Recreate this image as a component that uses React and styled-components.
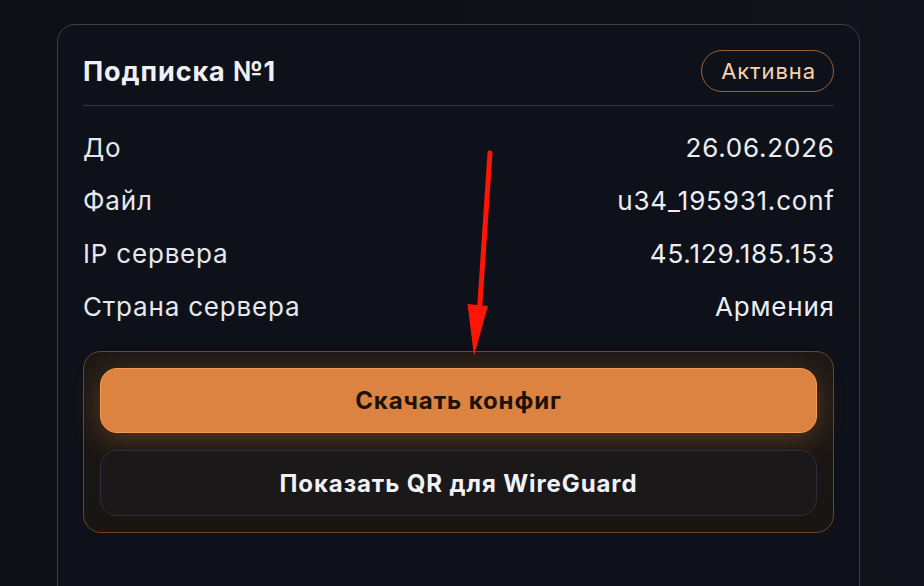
import React from 'react';
import styled, { createGlobalStyle } from 'styled-components';

const GlobalStyle = createGlobalStyle`
  html, body {
    margin: 0;
    padding: 0;
    background: #0d1017;
    font-family: Inter, "Noto Sans", sans-serif;
    color: #e9ebf1;
    overflow: hidden;
  }
`;

const Page = styled.div`
  position: relative;
  height: 586px;
  padding: 24px 65px 0 57px;
  box-sizing: border-box;
  background: linear-gradient(90deg, #0c0f16 0%, #0e1118 70%, #11141c 100%);
`;

const Card = styled.section`
  box-sizing: border-box;
  width: 803px;
  padding: 25px 25px 80px;
  border: 1px solid #3c3f51;
  border-radius: 18px;
  background: #0e1119;
`;

const Header = styled.div`
  display: flex;
  justify-content: space-between;
  align-items: center;
  padding-bottom: 13px;
  border-bottom: 1.5px solid #33364a;
`;

const Title = styled.h2`
  margin: 0;
  font-size: 27px;
  font-weight: 700;
  color: #eef0f6;
  letter-spacing: 0.9px;
`;

const Badge = styled.span`
  box-sizing: border-box;
  height: 42px;
  display: inline-flex;
  align-items: center;
  padding: 0 17px 0 19px;
  border: 1.5px solid #9a5f2e;
  border-radius: 21px;
  font-size: 22px;
  letter-spacing: 0.9px;
  color: #f6d3ad;
`;

const Rows = styled.dl`
  margin: 15px 0 0;
  display: flex;
  flex-direction: column;
`;

const Row = styled.div`
  height: 53px;
  display: flex;
  justify-content: space-between;
  align-items: center;
  font-size: 26px;
  letter-spacing: 0.8px;
`;

const Label = styled.dt`
  color: #e6e8ee;
`;

const Value = styled.dd`
  margin: 0 -0.8px 0 0;
  color: #eceef4;
`;

const Actions = styled.div`
  margin-top: 18px;
  padding: 16px;
  display: flex;
  flex-direction: column;
  gap: 17px;
  border: 1px solid #6e4526;
  border-radius: 18px;
  background: linear-gradient(180deg, #1d1815 0%, #181513 100%);
`;

const ActionButton = styled.button`
  box-sizing: border-box;
  height: ${p => (p.$primary ? '65px' : '66px')};
  width: 100%;
  border-radius: 17px;
  font-family: inherit;
  font-size: 24px;
  font-weight: 700;
  letter-spacing: 0.9px;
  cursor: pointer;
  border: 1.5px solid ${p => (p.$primary ? '#f39b52' : '#2c2f3d')};
  background: ${p => (p.$primary ? '#dc8341' : '#1b1819')};
  color: ${p => (p.$primary ? '#1d1209' : '#f0f2f8')};
  box-shadow: ${p => (p.$primary ? '0 6px 28px rgba(220, 131, 65, 0.32)' : 'none')};
`;

const Arrow = styled.svg`
  position: absolute;
  left: 0;
  top: 0;
  pointer-events: none;
`;

const details = [
  ['До', '26.06.2026'],
  ['Файл', 'u34_195931.conf'],
  ['IP сервера', '45.129.185.153'],
  ['Страна сервера', 'Армения'],
];

export default function App() {
  return (
    <>
      <GlobalStyle />
      <Page>
        <Card>
          <Header>
            <Title>Подписка №1</Title>
            <Badge>Активна</Badge>
          </Header>
          <Rows>
            {details.map(([label, value]) => (
              <Row key={label}>
                <Label>{label}</Label>
                <Value>{value}</Value>
              </Row>
            ))}
          </Rows>
          <Actions>
            <ActionButton $primary>Скачать конфиг</ActionButton>
            <ActionButton>Показать QR для WireGuard</ActionButton>
          </Actions>
        </Card>
        <Arrow width="924" height="586" viewBox="0 0 924 586">
          <line x1="490" y1="153" x2="479.5" y2="310" stroke="#ff1408" strokeWidth="5" strokeLinecap="round" />
          <polygon points="467.5,304 488,306 474,356" fill="#ff1408" />
        </Arrow>
      </Page>
    </>
  );
}
